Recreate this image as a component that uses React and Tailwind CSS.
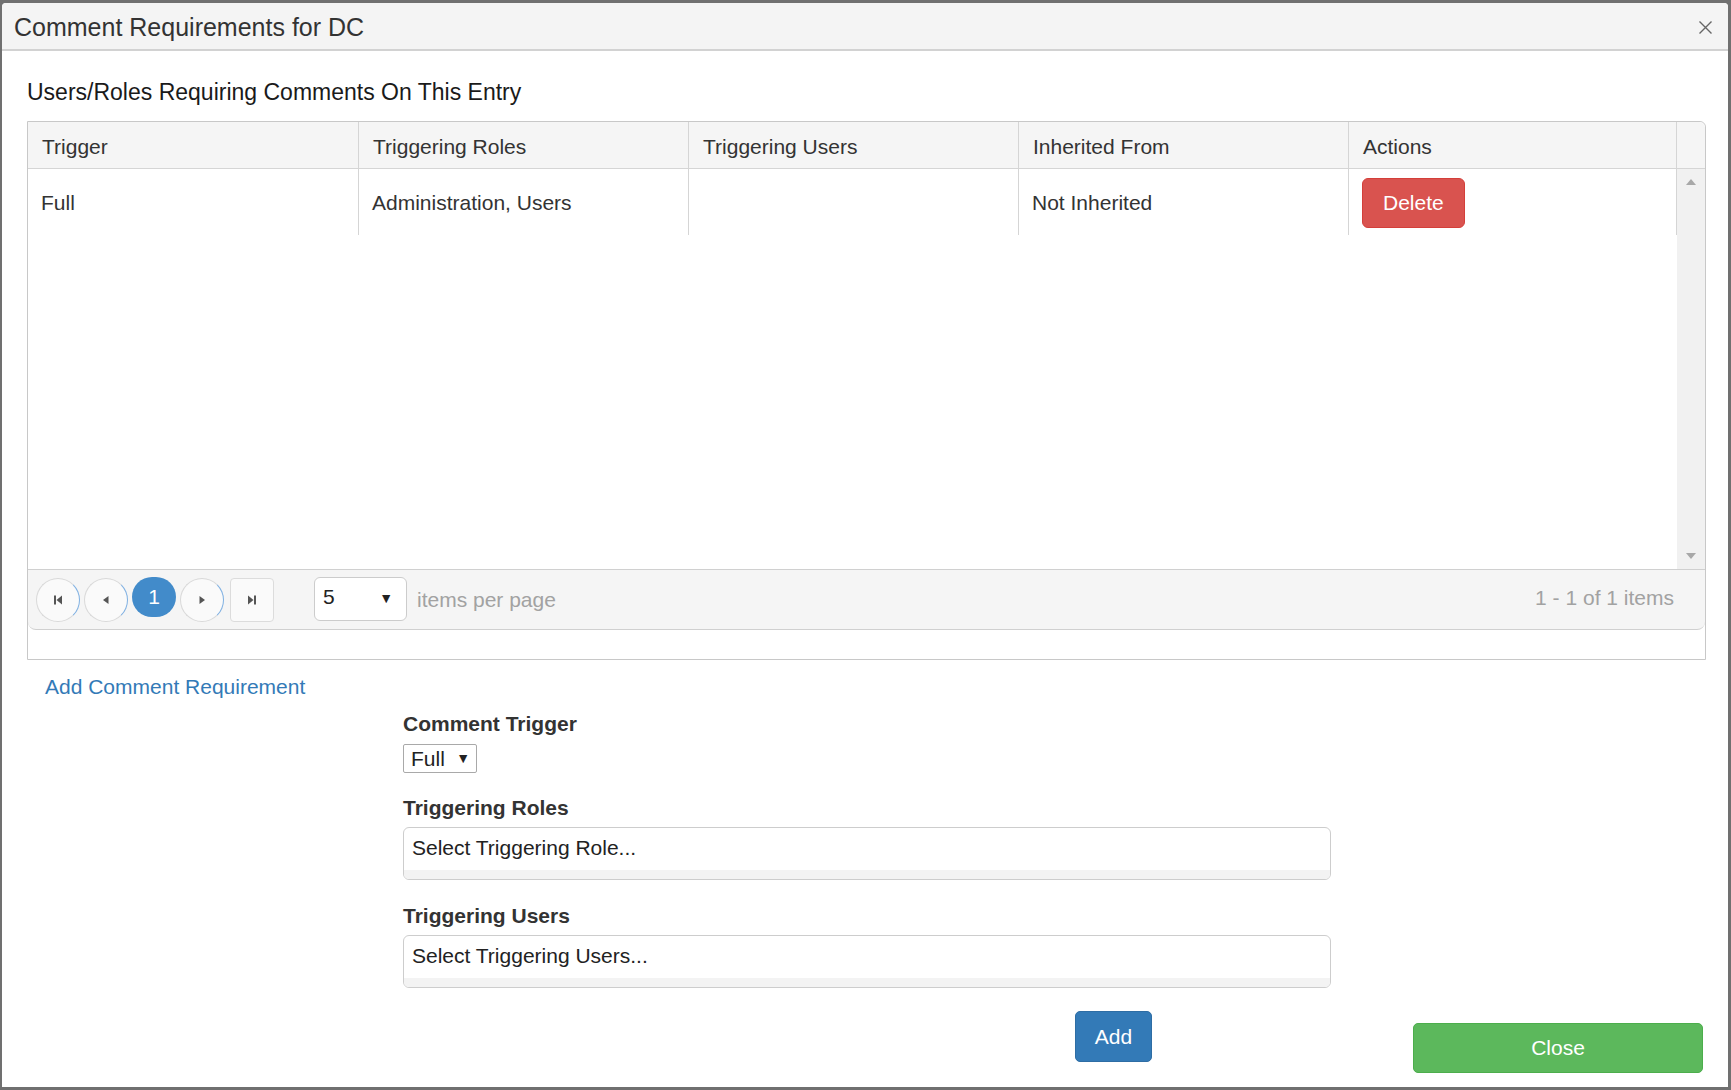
import React from 'react';

const FONT = { fontFamily: '"Liberation Sans", Arial, sans-serif' };

const COLS = [
  { label: 'Trigger', w: 'w-[331px]', value: 'Full' },
  { label: 'Triggering Roles', w: 'w-[330px]', value: 'Administration, Users' },
  { label: 'Triggering Users', w: 'w-[330px]', value: '' },
  { label: 'Inherited From', w: 'w-[330px]', value: 'Not Inherited' },
  { label: 'Actions', w: 'w-[328px]', value: null }
];

const PagerIcon = ({ kind }) => {
  if (kind === 'first') {
    return (
      <svg width="14" height="14" viewBox="0 0 14 14" fill="#555">
        <rect x="3" y="2.5" width="2" height="9" />
        <path d="M11 2.5 L5.5 7 L11 11.5 Z" />
      </svg>
    );
  }
  if (kind === 'last') {
    return (
      <svg width="14" height="14" viewBox="0 0 14 14" fill="#555">
        <rect x="9" y="2.5" width="2" height="9" />
        <path d="M3 2.5 L8.5 7 L3 11.5 Z" />
      </svg>
    );
  }
  if (kind === 'prev') {
    return (
      <svg width="14" height="14" viewBox="0 0 14 14" fill="#555">
        <path d="M9.5 3 L4 7 L9.5 11 Z" />
      </svg>
    );
  }
  return (
    <svg width="14" height="14" viewBox="0 0 14 14" fill="#555">
      <path d="M4.5 3 L10 7 L4.5 11 Z" />
    </svg>
  );
};

const RoundPagerButton = ({ kind }) => (
  <button className="w-[44px] h-[44px] rounded-full border border-[#d9d9d9] border-r-[#7fb0e2] bg-[#fafafa] flex items-center justify-center">
    <PagerIcon kind={kind} />
  </button>
);

const MultiSelect = ({ placeholder }) => (
  <div className="mt-[5px] h-[53px] rounded-[6px] border border-[#cdcdcd] overflow-hidden flex flex-col bg-white">
    <div className="flex-1 pl-[8px] pt-[6px] text-[21px] leading-[28px] text-[#222]">{placeholder}</div>
    <div className="h-[9px] bg-[#f3f3f3]" />
  </div>
);

export default function App() {
  return (
    <div className="w-[1731px] h-[1090px] bg-[#707070] pt-[3px] pl-[2px] pr-[3px] pb-[3px]" style={FONT}>
      <div className="h-full flex flex-col bg-white rounded-t-[4px] overflow-hidden">
        {/* header */}
        <div className="h-[48px] shrink-0 bg-[#f4f4f4] border-b-2 border-[#d2d2d2] flex items-center justify-between pl-[12px] pr-[15px] pt-[3px]">
          <span className="text-[25px] text-[#333]">Comment Requirements for DC</span>
          <svg width="15" height="15" viewBox="0 0 15 15" stroke="#666" strokeWidth="1.4" fill="none">
            <path d="M1.5 1.5 L13.5 13.5 M13.5 1.5 L1.5 13.5" />
          </svg>
        </div>

        <div className="flex-1 flex flex-col pl-[25px] pr-[22px]">
          <h3 className="mt-[27px] text-[23px] leading-[28px] text-[#1a1a1a]">
            Users/Roles Requiring Comments On This Entry
          </h3>

          {/* grid */}
          <div className="mt-[15px] h-[539px] border border-[#c8c8c8] rounded-tr-[6px] flex flex-col">
            <div className="h-[47px] bg-[#f5f5f5] border-b border-[#d5d5d5] flex rounded-tr-[6px]">
              {COLS.map((c) => (
                <div key={c.label} className={`${c.w} border-r border-[#d5d5d5] flex items-center pl-[14px] pt-[3px] text-[21px] text-[#333]`}>
                  {c.label}
                </div>
              ))}
              <div className="flex-1" />
            </div>

            <div className="h-[400px] flex">
              <div className="w-[1649px]">
                <div className="h-[66px] flex">
                  {COLS.map((c) => (
                    <div key={c.label} className={`${c.w} border-r border-[#d5d5d5] flex items-center pl-[13px] pt-[1px] text-[21px] text-[#333]`}>
                      {c.value === null ? (
                        <button className="h-[50px] px-[20px] rounded-[6px] bg-[#d9534f] border border-[#d43f3a] text-white text-[21px]">
                          Delete
                        </button>
                      ) : (
                        c.value
                      )}
                    </div>
                  ))}
                </div>
              </div>
              <div className="flex-1 bg-[#f1f1f1] flex flex-col items-center justify-between pt-[10px] pb-[10px]">
                <svg width="10" height="6" viewBox="0 0 10 6" fill="#a8a8a8">
                  <path d="M5 0 L10 6 L0 6 Z" />
                </svg>
                <svg width="10" height="6" viewBox="0 0 10 6" fill="#a8a8a8">
                  <path d="M0 0 L10 0 L5 6 Z" />
                </svg>
              </div>
            </div>

            {/* pager */}
            <div className="h-[61px] bg-[#f5f5f5] border-t border-b border-[#d0d0d0] rounded-b-[8px] flex items-center pl-[8px] pr-[31px]">
              <div className="flex items-center gap-[4px]">
                <RoundPagerButton kind="first" />
                <RoundPagerButton kind="prev" />
                <div className="w-[44px] h-[40px] mb-[5px] rounded-full bg-[#428bca] text-white text-[21px] flex items-center justify-center">
                  1
                </div>
                <RoundPagerButton kind="next" />
                <button className="ml-[2px] w-[44px] h-[44px] rounded-[4px] border border-[#dcdcdc] bg-[#fafafa] flex items-center justify-center">
                  <PagerIcon kind="last" />
                </button>
              </div>
              <div className="ml-[40px] w-[93px] h-[44px] rounded-[6px] border border-[#cccccc] bg-white flex items-center justify-between pl-[8px] pr-[13px] mb-[2px]">
                <span className="text-[21px] text-[#222] -mt-[4px]">5</span>
                <span className="text-[14px] text-[#222]">▼</span>
              </div>
              <span className="ml-[10px] text-[21px] text-[#a2a2a2]">items per page</span>
              <span className="ml-auto text-[21px] text-[#a2a2a2] -mt-[4px]">1 - 1 of 1 items</span>
            </div>
            <div className="flex-1" />
          </div>

          <a href="#" className="mt-[13px] ml-[18px] self-start text-[21px] leading-[28px] text-[#337ab7]">
            Add Comment Requirement
          </a>

          {/* form */}
          <div className="ml-[376px] w-[928px] flex flex-col">
            <label className="mt-[9px] font-bold text-[21px] leading-[28px] text-[#333]">Comment Trigger</label>
            <div className="mt-[6px] w-[74px] h-[29px] border border-[#a9a9a9] rounded-[2px] bg-white flex items-center justify-between pl-[7px] pr-[6px]">
              <span className="text-[21px] text-[#222]">Full</span>
              <span className="text-[14px] text-[#222]">▼</span>
            </div>
            <label className="mt-[21px] font-bold text-[21px] leading-[28px] text-[#333]">Triggering Roles</label>
            <MultiSelect placeholder="Select Triggering Role..." />
            <label className="mt-[22px] font-bold text-[21px] leading-[28px] text-[#333]">Triggering Users</label>
            <MultiSelect placeholder="Select Triggering Users..." />
          </div>

          {/* footer buttons */}
          <div className="mt-[23px] flex items-start">
            <button className="ml-[1048px] w-[77px] h-[51px] rounded-[5px] bg-[#337ab7] border border-[#2e6da4] text-white text-[21px]">
              Add
            </button>
            <button className="ml-auto mr-[3px] mt-[12px] w-[290px] h-[50px] rounded-[5px] bg-[#5cb85c] border border-[#4cae4c] text-white text-[21px]">
              Close
            </button>
          </div>
        </div>
      </div>
    </div>
  );
}
